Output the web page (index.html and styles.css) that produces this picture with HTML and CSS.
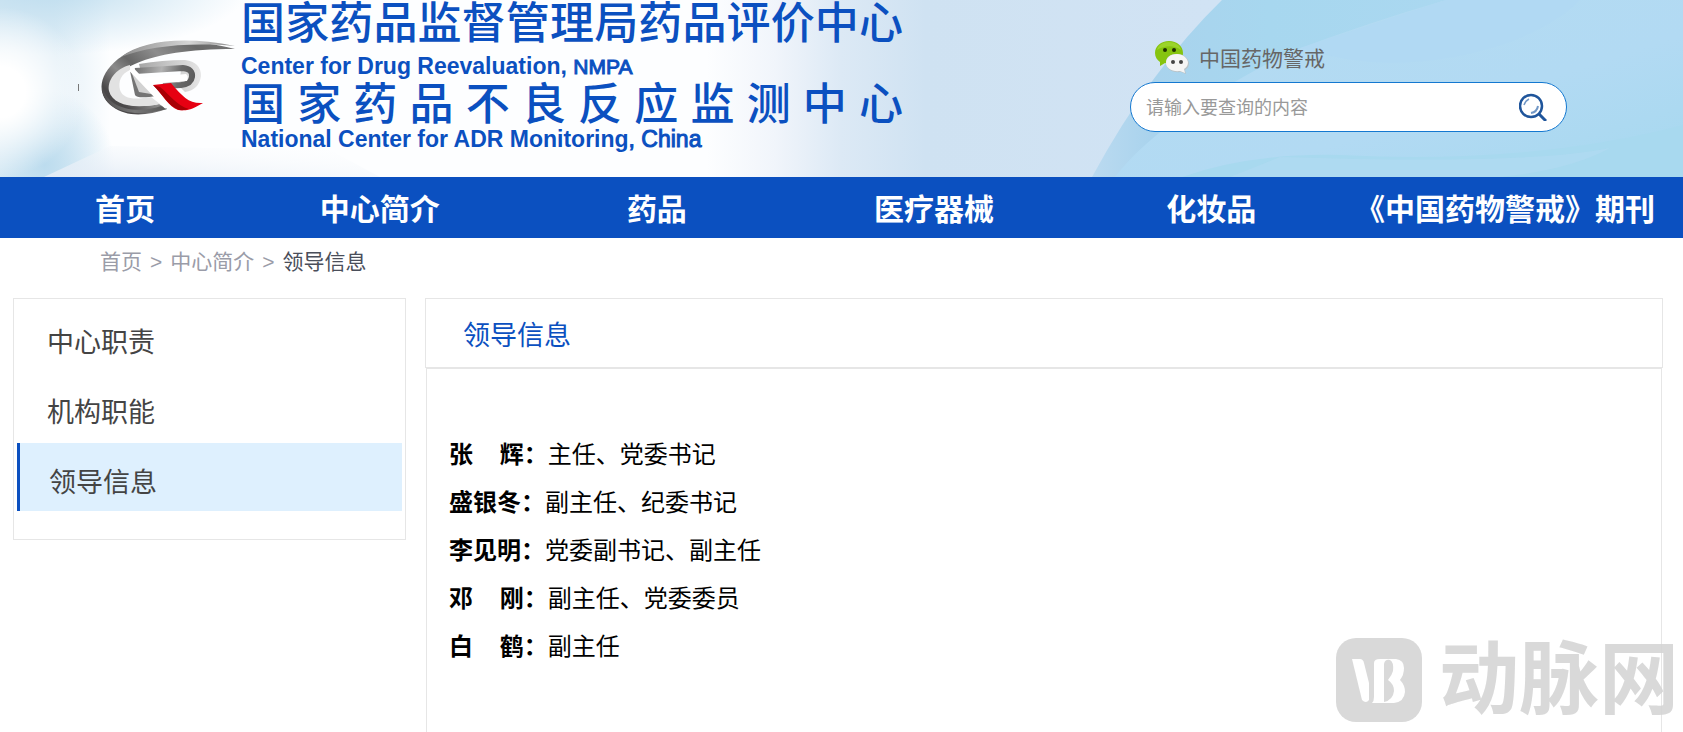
FILE: index.html
```html
<!DOCTYPE html>
<html lang="zh-CN">
<head>
  <meta charset="UTF-8" />
  <title>领导信息</title>
  <link rel="stylesheet" href="styles.css">
</head>
<body>
  <header class="header">
    <svg class="header-bg" viewBox="0 0 1683 177" preserveAspectRatio="none" aria-hidden="true">
      <defs>
        <linearGradient id="sky" x1="0" x2="1" y1="0" y2="0">
          <stop offset="0" stop-color="#fdfeff" />
          <stop offset="0.42" stop-color="#fdfeff" />
          <stop offset="0.46" stop-color="#f1f5fb" />
          <stop offset="0.5" stop-color="#dce9f5" />
          <stop offset="0.55" stop-color="#cfe2f2" />
          <stop offset="0.72" stop-color="#d1e3f4" />
        </linearGradient>
        <linearGradient id="wave" x1="0" x2="1" y1="0" y2="0">
          <stop offset="0" stop-color="#bbdaf0" />
          <stop offset="0.1" stop-color="#a9d3ed" />
          <stop offset="0.3" stop-color="#a7d7ef" />
          <stop offset="1" stop-color="#afd9f2" />
        </linearGradient>
        <linearGradient id="wave2" x1="0" x2="1" y1="0" y2="1">
          <stop offset="0" stop-color="#b4dbf1" />
          <stop offset="0.6" stop-color="#b2daf3" />
          <stop offset="1" stop-color="#a6d8ef" />
        </linearGradient>
        <linearGradient id="edge" x1="0" x2="1" y1="0" y2="0">
          <stop offset="0" stop-color="#e2eff7" />
          <stop offset="0.5" stop-color="#e2eff7" />
          <stop offset="1" stop-color="#e2eff7" stop-opacity="0" />
        </linearGradient>
        <radialGradient id="glow">
          <stop offset="0" stop-color="#bcdcee" />
          <stop offset="1" stop-color="#bcdcee" stop-opacity="0" />
        </radialGradient>
        <radialGradient id="white">
          <stop offset="0" stop-color="#fff" />
          <stop offset="0.3" stop-color="#fff" />
          <stop offset="1" stop-color="#fff" stop-opacity="0" />
        </radialGradient>
        <linearGradient id="ray" x1="0" x2="1" y1="1" y2="0">
          <stop offset="0" stop-color="#e2ebf5" />
          <stop offset="1" stop-color="#fff" stop-opacity="0" />
        </linearGradient>
      </defs>
      <rect width="1683" height="177" fill="url(#sky)" />
      <rect width="110" height="177" fill="url(#edge)" />
      <ellipse cx="50" cy="-15" rx="200" ry="70" fill="url(#glow)" />
      <ellipse cx="45" cy="165" rx="70" ry="75" fill="url(#glow)" />
      <ellipse cx="0" cy="92" rx="85" ry="85" fill="url(#white)" />
      <path d="M44 177 L110 146 L330 150 L380 177Z" fill="url(#ray)" />
      <path d="M1222 0 Q1150 70 1092 177 L1683 177 L1683 0Z" fill="url(#wave)" />
      <path d="M1115 177 Q1160 118 1290 52 Q1370 22 1446 0 L1683 0 L1683 177Z" fill="url(#wave2)" />
      <path d="M1300 48 Q1400 80 1510 42 Q1560 22 1580 0 L1446 0Z" fill="#b1d9f3" />
      <path d="M1182 177 Q1250 153 1340 155 Q1530 165 1683 125 L1683 177Z" fill="#a8d9ef" />
      <path d="M1280 157 Q1530 165 1610 148 Q1570 170 1500 177 L1230 177Z" fill="#b2daf2" opacity="0.6" />
      <rect x="78" y="84" width="1" height="7" fill="#777" />
    </svg>

    <a class="brand" href="#">
      <svg class="brand-logo" viewBox="0 0 135 76" aria-hidden="true">
        <defs>
          <linearGradient id="steel" x1="0" x2="1" y1="0.6" y2="0">
            <stop offset="0" stop-color="#4a4849" />
            <stop offset="0.18" stop-color="#8b8b8b" />
            <stop offset="0.3" stop-color="#666" />
            <stop offset="0.5" stop-color="#8d8d8d" />
            <stop offset="0.75" stop-color="#686868" />
            <stop offset="1" stop-color="#777" />
          </linearGradient>
          <linearGradient id="shine" x1="0" x2="1" y1="0" y2="0">
            <stop offset="0" stop-color="#8d8d8d" />
            <stop offset="0.6" stop-color="#d5d5d5" />
            <stop offset="1" stop-color="#888" />
          </linearGradient>
          <linearGradient id="steel2" x1="0" x2="1" y1="0" y2="0">
            <stop offset="0" stop-color="#4f4d4e" />
            <stop offset="0.5" stop-color="#777" />
            <stop offset="1" stop-color="#565656" />
          </linearGradient>
          <linearGradient id="band" gradientUnits="userSpaceOnUse" x1="32" x2="94" y1="26" y2="40">
            <stop offset="0" stop-color="#6a6a6a" />
            <stop offset="0.45" stop-color="#b2b2b2" />
            <stop offset="0.75" stop-color="#6a6a6a" />
            <stop offset="1" stop-color="#5a5a5a" />
          </linearGradient>
          <linearGradient id="rim" x1="0" x2="1" y1="0" y2="0">
            <stop offset="0" stop-color="#a5a5a5" />
            <stop offset="0.5" stop-color="#c8c8c8" />
            <stop offset="1" stop-color="#e6e6e6" />
          </linearGradient>
        </defs>
        <path d="M134 9 C84 -4 42 0 17 19 C-4 36 -4 56 12 67 C25 77 46 76 66 69 L58 64 C35 69 17 65 11 53 C6 36 32 9 134 9Z" fill="url(#steel)" />
        <path d="M134 6 C84 -4 42 0 20 17 C46 7 84 2 134 6Z" fill="url(#shine)" />
        <path d="M1 44 C-1 67 25 80 66 69 L60 66 C34 75 4 68 1 44Z" fill="url(#steel2)" />
        <path d="M29 25 C14 29 6 41 8 51 C12 66 34 69 59 64 L50 57 C33 60 22 59 19 50 C17 41 20 34 29 30Z" fill="#e2e2e2" />
        <path d="M29 31 L34 55 Q36 59 56 56Z" fill="#747474" />
        <path d="M30 31 L38 52 L56 55Z" fill="#d2d2d2" />
        <path d="M38 24 Q62 20 84 20 Q100 22 100 36 Q98 50 84 52 L78 46 L80 30 L40 32Z" fill="url(#rim)" />
        <path d="M34 31 L82 28 Q92 29 91 37 Q90 44 80 45 L62 46" fill="none" stroke="url(#band)" stroke-width="6" />
        <path d="M42 38 L85 34 Q88 36 86 41 L52 43Z" fill="#fff" />
        <path d="M30 29 L66 67" stroke="#fff" stroke-width="5" />
        <path d="M52 45 L70 43 C82 57 88 64 102 63 C91 69 89 71 77 70 C67 66 63 56 52 45Z" fill="#e60012" />
        <path d="M52 45 L59 47 C68 54 76 66 88 69 C84 70 80 71 76 69 C66 64 63 56 52 45Z" fill="#a80005" />
      </svg>
      <span class="brand-text">
        <span class="brand-cn">国家药品监督管理局药品评价中心</span>
        <span class="brand-en brand-en-first">Center for Drug Reevaluation, <span class="brand-nmpa">NMPA</span></span>
        <span class="brand-cn">国家药品不良反应监测中心</span>
        <span class="brand-en">National Center for ADR Monitoring<span class="brand-china">, China</span></span>
      </span>
    </a>

    <div class="tools">
      <a class="wechat" href="#">
        <svg class="wechat-icon" viewBox="0 0 34 32" aria-hidden="true">
          <path d="M14 0 C6 0 0 5 0 12 C0 16 2 19 5 21 L5 25 L10 22 C20 25 28 20 28 12 C28 5 22 0 14 0Z" fill="#86c40f" />
          <path d="M14 1 C8 1 3 4 2 9 C10 4 19 4 26 9 C25 4 20 1 14 1Z" fill="#9bd42a" />
          <circle cx="10" cy="9" r="2" fill="#203000" />
          <circle cx="19" cy="9" r="2" fill="#203000" />
          <path d="M22 13 C15 13 11 16 11 22 C11 28 17 32 26 31 L31 33 L30 29 C33 27 34 25 34 22 C33 17 29 13 22 13Z" fill="#b9c3c8" />
          <path d="M22 13 C15 13 11 17 11 22 C11 27 17 31 25 30 L30 32 L29 28 C32 26 33 24 33 21 C32 17 28 13 22 13Z" fill="#f5f5f5" />
          <circle cx="18" cy="21" r="2" fill="#444" />
          <circle cx="26" cy="21" r="2" fill="#444" />
        </svg>
        中国药物警戒
      </a>
      <form class="search">
        <input class="search-input" type="text" name="keyword" placeholder="请输入要查询的内容" aria-label="请输入要查询的内容" />
        <button class="search-btn" type="submit" aria-label="搜索">
          <svg viewBox="0 0 28 28" fill="none" stroke="#1f559b" aria-hidden="true">
            <circle cx="12" cy="13" r="11" stroke-width="2.5" />
            <path d="M5 12 Q6 8 10 6" stroke="#7197c6" stroke-width="1.5" />
            <path d="M19 13 Q18 19 12 20" stroke="#7197c6" stroke-width="2" />
            <path d="M20 21 L27 28" stroke-width="3" />
          </svg>
        </button>
      </form>
    </div>
  </header>

  <nav class="nav">
    <a href="#">首页</a>
    <a href="#">中心简介</a>
    <a href="#">药品</a>
    <a href="#">医疗器械</a>
    <a href="#">化妆品</a>
    <a href="#">《中国药物警戒》期刊</a>
  </nav>

  <div class="crumbs">
    <a href="#">首页</a>
    <span>&gt;</span>
    <a href="#">中心简介</a>
    <span>&gt;</span>
    <a class="current" href="#">领导信息</a>
  </div>

  <div class="content">
    <aside class="side">
      <a href="#">中心职责</a>
      <a href="#">机构职能</a>
      <a class="active" href="#">领导信息</a>
    </aside>

    <main class="main">
      <h1 class="main-title">领导信息</h1>
      <div class="main-body">
        <p><strong>张&nbsp;&nbsp;&nbsp;&nbsp;辉：</strong>主任、党委书记</p>
        <p><strong>盛银冬：</strong>副主任、纪委书记</p>
        <p><strong>李见明：</strong>党委副书记、副主任</p>
        <p><strong>邓&nbsp;&nbsp;&nbsp;&nbsp;刚：</strong>副主任、党委委员</p>
        <p><strong>白&nbsp;&nbsp;&nbsp;&nbsp;鹤：</strong>副主任</p>
      </div>
    </main>
  </div>

  <div class="watermark">
    <svg class="watermark-logo" viewBox="0 0 86 84" aria-hidden="true">
      <rect width="86" height="84" rx="20" fill="#d3d3d3" />
      <path d="M16 21 L24 21 Q27 21 28 25 L33 45 L33 62 Q30 66 26 62Z" fill="#fff" />
      <path d="M38 25 Q38 21 44 21 L60 21 Q68 22 68 30 Q68 37 64 42 Q69 47 69 54 Q68 64 58 65 L36 65 Q38 63 38 59Z" fill="#fff" />
      <path d="M48 26 Q49 21 54 22 Q58 24 57 33 Q56 37 52 42 Q58 46 58 53 Q57 62 48 64Z" fill="#d3d3d3" />
    </svg>
    <span>动脉网</span>
  </div>
</body>
</html>
```
FILE: styles.css
```css
* {
  box-sizing: border-box;
}
body {
  margin: 0;
  min-height: 100vh;
  display: flex;
  flex-direction: column;
  font-family: "Liberation Sans", "Noto Sans CJK SC", sans-serif;
  color: #000;
  background: #fff;
}
a {
  color: inherit;
  text-decoration: none;
}

/* header */
.header {
  position: relative;
  display: flex;
  justify-content: space-between;
  height: 177px;
  padding: 0 116px 0 101px;
}
.header-bg {
  position: absolute;
  top: 0;
  left: 0;
  width: 100%;
  height: 100%;
}
.brand {
  position: relative;
  display: flex;
  gap: 5px;
  color: #0b50c0;
}
.brand-logo {
  width: 135px;
  height: 76px;
  margin-top: 40px;
}
.brand-text {
  width: 662px;
  padding-top: 2px;
}
.brand-cn {
  display: block;
  font-size: 44px;
  font-weight: 500;
  line-height: 44px;
  text-align: justify;
  text-align-last: justify;
}
.brand-en {
  display: block;
  font-size: 23px;
  font-weight: bold;
  line-height: 24px;
}
.brand-en-first {
  margin: 8px 0 4px;
}
.brand-nmpa,
.brand-china {
  font-weight: normal;
  -webkit-text-stroke: 1px #0b50c0;
}
.brand-nmpa {
  font-size: 21px;
}
.tools {
  position: relative;
  width: 437px;
  padding-top: 38px;
}
.wechat {
  display: flex;
  align-items: center;
  gap: 10px;
  height: 38px;
  padding-left: 25px;
  font-size: 21px;
  color: #666;
}
.wechat-icon {
  width: 34px;
  height: 32px;
  overflow: visible;
}
.search {
  display: flex;
  align-items: center;
  height: 50px;
  margin-top: 6px;
  padding: 0 19px 0 15px;
  border: 1px solid #1478d0;
  border-radius: 25px;
  background: #fff;
}
.search-input {
  flex: 1;
  padding: 2px 0 0;
  border: none;
  outline: none;
  background: none;
  font-family: inherit;
  font-size: 18px;
}
.search-input::placeholder {
  color: #999;
}
.search-btn {
  width: 28px;
  height: 28px;
  padding: 0;
  border: none;
  background: none;
  cursor: pointer;
}

/* main menu */
.nav {
  display: grid;
  grid-template-columns: 232fr 277fr 277fr 277fr 277fr 310fr;
  padding: 4px 23px 0 9px;
  background: #0b50c0;
}
.nav a {
  font-size: 30px;
  font-weight: bold;
  line-height: 57px;
  color: #fff;
  text-align: center;
  white-space: nowrap;
}

.crumbs {
  display: flex;
  gap: 8px;
  padding: 0 100px;
  font-size: 21px;
  line-height: 48px;
  color: #9a9ca8;
}
.crumbs .current {
  color: #4a4e5a;
}

/* two columns */
.content {
  flex: 1;
  display: flex;
  align-items: flex-start;
  gap: 19px;
  padding: 12px 20px 0 13px;
}
.side {
  width: 393px;
  padding: 2px 3px 28px;
  border: 1px solid #e6e6e6;
}
.side a {
  display: block;
  margin-top: 2px;
  padding: 12px 0 0 30px;
  font-size: 27px;
  line-height: 56px;
  color: #444;
}
.side .active {
  padding-left: 29px;
  border-left: 3px solid #0b50c0;
  background: #def0fe;
}
.main {
  flex: 1;
  align-self: stretch;
  display: flex;
  flex-direction: column;
}
.main-title {
  margin: 0;
  padding: 6px 0 0 37px;
  border: 1px solid #e6e6e6;
  font-size: 27px;
  font-weight: normal;
  line-height: 62px;
  color: #0b50c0;
}
.main-body {
  flex: 1;
  margin: 0 1px;
  padding: 62px 22px 46px;
  border: 1px solid #e6e6e6;
  border-bottom: none;
}
.main-body p {
  margin: 0;
  font-size: 24px;
  line-height: 48px;
}

.watermark {
  position: fixed;
  right: 4px;
  bottom: 10px;
  display: flex;
  align-items: center;
  gap: 17px;
  font-size: 80px;
  font-weight: bold;
  line-height: 84px;
  color: #d3d3d3;
  opacity: 0.85;
}
.watermark-logo {
  width: 86px;
  height: 84px;
}
```
